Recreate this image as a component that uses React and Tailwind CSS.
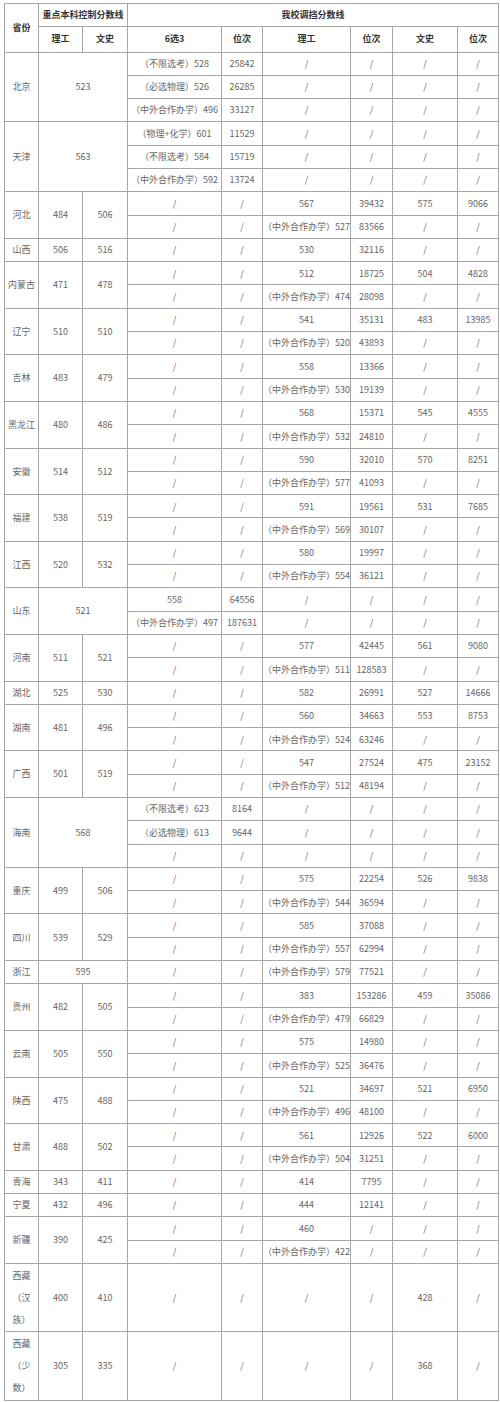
const S = "/";
const Z = (n) => `（中外合作办学）${n}`;

// each group: province, control lines (li/wen or merged), and its rows of 6 cells
const groups = [
  {
    name: "北京",
    merged: "523",
    rows: [
      ["（不限选考）528", "25842", S, S, S, S],
      ["（必选物理）526", "26285", S, S, S, S],
      [Z(496), "33127", S, S, S, S],
    ],
  },
  {
    name: "天津",
    merged: "563",
    rows: [
      ["（物理+化学）601", "11529", S, S, S, S],
      ["（不限选考）584", "15719", S, S, S, S],
      [Z(592), "13724", S, S, S, S],
    ],
  },
  { name: "河北", li: "484", wen: "506", rows: [[S, S, "567", "39432", "575", "9066"], [S, S, Z(527), "83566", S, S]] },
  { name: "山西", li: "506", wen: "516", rows: [[S, S, "530", "32116", S, S]] },
  { name: "内蒙古", li: "471", wen: "478", rows: [[S, S, "512", "18725", "504", "4828"], [S, S, Z(474), "28098", S, S]] },
  { name: "辽宁", li: "510", wen: "510", rows: [[S, S, "541", "35131", "483", "13985"], [S, S, Z(520), "43893", S, S]] },
  { name: "吉林", li: "483", wen: "479", rows: [[S, S, "558", "13366", S, S], [S, S, Z(530), "19139", S, S]] },
  { name: "黑龙江", li: "480", wen: "486", rows: [[S, S, "568", "15371", "545", "4555"], [S, S, Z(532), "24810", S, S]] },
  { name: "安徽", li: "514", wen: "512", rows: [[S, S, "590", "32010", "570", "8251"], [S, S, Z(577), "41093", S, S]] },
  { name: "福建", li: "538", wen: "519", rows: [[S, S, "591", "19561", "531", "7685"], [S, S, Z(569), "30107", S, S]] },
  { name: "江西", li: "520", wen: "532", rows: [[S, S, "580", "19997", S, S], [S, S, Z(554), "36121", S, S]] },
  {
    name: "山东",
    merged: "521",
    rows: [
      ["558", "64556", S, S, S, S],
      [Z(497), "187631", S, S, S, S],
    ],
  },
  { name: "河南", li: "511", wen: "521", rows: [[S, S, "577", "42445", "561", "9080"], [S, S, Z(511), "128583", S, S]] },
  { name: "湖北", li: "525", wen: "530", rows: [[S, S, "582", "26991", "527", "14666"]] },
  { name: "湖南", li: "481", wen: "496", rows: [[S, S, "560", "34663", "553", "8753"], [S, S, Z(524), "63246", S, S]] },
  { name: "广西", li: "501", wen: "519", rows: [[S, S, "547", "27524", "475", "23152"], [S, S, Z(512), "48194", S, S]] },
  {
    name: "海南",
    merged: "568",
    rows: [
      ["（不限选考）623", "8164", S, S, S, S],
      ["（必选物理）613", "9644", S, S, S, S],
      [S, S, S, S, S, S],
    ],
  },
  { name: "重庆", li: "499", wen: "506", rows: [[S, S, "575", "22254", "526", "9838"], [S, S, Z(544), "36594", S, S]] },
  { name: "四川", li: "539", wen: "529", rows: [[S, S, "585", "37088", S, S], [S, S, Z(557), "62994", S, S]] },
  { name: "浙江", merged: "595", rows: [[S, S, Z(579), "77521", S, S]] },
  { name: "贵州", li: "482", wen: "505", rows: [[S, S, "383", "153286", "459", "35086"], [S, S, Z(479), "66829", S, S]] },
  { name: "云南", li: "505", wen: "550", rows: [[S, S, "575", "14980", S, S], [S, S, Z(525), "36476", S, S]] },
  { name: "陕西", li: "475", wen: "488", rows: [[S, S, "521", "34697", "521", "6950"], [S, S, Z(496), "48100", S, S]] },
  { name: "甘肃", li: "488", wen: "502", rows: [[S, S, "561", "12926", "522", "6000"], [S, S, Z(504), "31251", S, S]] },
  { name: "青海", li: "343", wen: "411", rows: [[S, S, "414", "7795", S, S]] },
  { name: "宁夏", li: "432", wen: "496", rows: [[S, S, "444", "12141", S, S]] },
  { name: "新疆", li: "390", wen: "425", rows: [[S, S, "460", S, S, S], [S, S, Z(422), S, S, S]] },
  { name: "西藏（汉族）", li: "400", wen: "410", tall: true, rows: [[S, S, S, S, "428", S]] },
  { name: "西藏（少数）", li: "305", wen: "335", tall: true, rows: [[S, S, S, S, "368", S]] },
];

const cell = "border border-[#a6a6a6] p-0 text-center align-middle";
const th = `${cell} font-bold text-[#333]`;

export default function App() {
  return (
    <div className="bg-white pt-[3px] pl-[4px] font-['Noto_Sans_CJK_SC','Noto_Sans',sans-serif] text-[9px] text-[#666] [text-spacing-trim:space-all]">
      <table className="w-[494px] table-fixed border-collapse">
        <colgroup>
          <col className="w-[34px]" />
          <col className="w-[44px]" />
          <col className="w-[45px]" />
          <col className="w-[94px]" />
          <col className="w-[41px]" />
          <col className="w-[88px]" />
          <col className="w-[42px]" />
          <col className="w-[65px]" />
          <col className="w-[41px]" />
        </colgroup>
        <thead>
          <tr className="h-[22.5px]">
            <th rowSpan={2} className={th}>
              省份
            </th>
            <th colSpan={2} className={th}>
              重点本科控制分数线
            </th>
            <th colSpan={6} className={th}>
              我校调挡分数线
            </th>
          </tr>
          <tr className="h-[26px]">
            <th className={th}>理工</th>
            <th className={th}>文史</th>
            <th className={th}>6选3</th>
            <th className={th}>位次</th>
            <th className={th}>理工</th>
            <th className={th}>位次</th>
            <th className={th}>文史</th>
            <th className={th}>位次</th>
          </tr>
        </thead>
        <tbody>
          {groups.map((g) =>
            g.rows.map((r, i) => (
              <tr key={g.name + i} className={g.tall ? "h-[68.5px]" : "h-[23.3px]"}>
                {i === 0 && (
                  <td rowSpan={g.rows.length} className={`${cell} ${g.tall ? "leading-[22px]" : ""}`}>
                    {g.name}
                  </td>
                )}
                {i === 0 &&
                  (g.merged ? (
                    <td rowSpan={g.rows.length} colSpan={2} className={cell}>
                      {g.merged}
                    </td>
                  ) : (
                    <>
                      <td rowSpan={g.rows.length} className={cell}>
                        {g.li}
                      </td>
                      <td rowSpan={g.rows.length} className={cell}>
                        {g.wen}
                      </td>
                    </>
                  ))}
                {r.map((v, j) => (
                  <td key={j} className={`${cell} whitespace-nowrap`}>
                    {v}
                  </td>
                ))}
              </tr>
            ))
          )}
        </tbody>
      </table>
    </div>
  );
}
